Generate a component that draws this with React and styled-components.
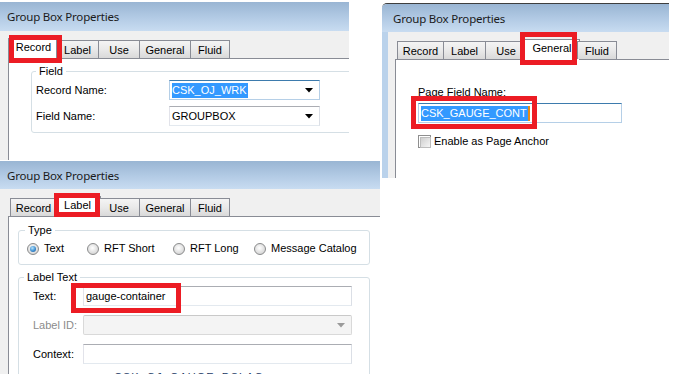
import React from 'react';
import styled, { createGlobalStyle, css } from 'styled-components';

const Global = createGlobalStyle`
  html, body { margin: 0; padding: 0; background: #fff; }
  * { box-sizing: border-box; }
`;

const UI_FONT = `"Liberation Sans", Arial, sans-serif`;

const Desktop = styled.div`
  position: relative;
  width: 677px;
  height: 374px;
  overflow: hidden;
  background: #fff;
  font: 11px/13px ${UI_FONT};
  color: #000;
`;

// dialogs sit on a free canvas, so they are placed by coordinates
const Win = styled.section`
  position: absolute;
  left: ${p => p.$x}px;
  top: ${p => p.$y}px;
  width: ${p => p.$w}px;
  height: ${p => p.$h}px;
  display: flex;
  flex-direction: column;
  overflow: hidden;
  background: #f0f0f0;
  ${p => p.$framed && css`
    border-top: 1px solid #3e3e3e;
    border-top-left-radius: 5px;
  `}
`;

const TitleBar = styled.div`
  flex: none;
  height: ${p => p.$h}px;
  padding-left: ${p => p.$indent}px;
  display: flex;
  align-items: center;
  background: linear-gradient(#99b5d3, #b3cbe5 55%, #c8dcf1);
  font: 11.5px "Noto Sans", "Open Sans", sans-serif;
  color: #1b1b1b;
  letter-spacing: -0.2px;
`;

const Body = styled.div`
  flex: 1;
  display: flex;
  flex-direction: column;
  padding: ${p => p.$top}px 0 0 ${p => p.$left}px;
  ${p => p.$framed && css`border-left: 6px solid #bad2eb;`}
`;

const TabStrip = styled.div`
  flex: none;
  display: flex;
  align-items: flex-end;
  height: 18px;
  padding-left: 2px;
  position: relative;
  z-index: 1;
`;

const Tab = styled.div`
  width: ${p => p.$w}px;
  height: 18px;
  margin-right: -1px;
  border: 1px solid #898c95;
  border-bottom: none;
  display: flex;
  align-items: center;
  justify-content: center;
  padding-top: 1px;
  background: linear-gradient(#f4f4f4, #e9e9e9 50%, #d9d9d9);
  white-space: nowrap;
  ${p => p.$active && css`
    background: #fff;
    height: 21px;
    margin: 0 -3px -1px -2px;
    width: ${p.$w + 4}px;
    padding-top: 0;
    padding-bottom: 3px;
  `}
`;

const Panel = styled.div`
  flex: 1;
  background: #fff;
  border-top: 1px solid #898c95;
  border-left: 1px solid #898c95;
  padding: ${p => p.$pad};
  display: flex;
  flex-direction: column;
  align-items: flex-start;
`;

const Group = styled.fieldset`
  margin: ${p => p.$margin || 0};
  width: ${p => p.$w}px;
  flex: none;
  border: 1px solid #d5dfe5;
  border-radius: 3px;
  padding: ${p => p.$pad};
  min-width: 0;
`;

const Legend = styled.legend`
  padding: 0 3px;
  font: 11px/13px ${UI_FONT};
  color: #000;
`;

const FormGrid = styled.div`
  display: grid;
  grid-template-columns: ${p => p.$cols};
  grid-auto-rows: 20px;
  row-gap: ${p => p.$gap}px;
  align-items: center;
  padding-left: ${p => p.$indent || 0}px;
`;

const FieldLabel = styled.span`
  color: ${p => (p.$disabled ? '#8b8b8b' : '#000')};
  white-space: nowrap;
`;

const TextBox = styled.div`
  height: 20px;
  width: ${p => p.$w}px;
  display: flex;
  align-items: center;
  padding: 0 2px;
  background: ${p => (p.$disabled ? '#f4f4f4' : '#fff')};
  border: 1px solid;
  border-color: ${p =>
    p.$focused
      ? '#3d7bad #b5cfe7 #b5cfe7 #b5cfe7'
      : p.$disabled
        ? '#c9c9c9 #d9d9d9 #d9d9d9 #d9d9d9'
        : '#abadb3 #dbdfe6 #e3e9ef #e2e3ea'};
  border-radius: ${p => (p.$disabled ? '2px' : 0)};
  white-space: nowrap;
`;

const Selected = styled.span`
  background: #3399ff;
  color: #fff;
  line-height: 15px;
  padding: 0 1px 0 0;
  ${p => p.$caret && css`border-right: 2px solid #e58a17;`}
`;

const Arrow = styled.svg`
  margin-left: auto;
  margin-right: 4px;
  flex: none;
`;

const RadioRow = styled.div`
  display: grid;
  grid-template-columns: 60px 86px 81px auto;
  padding: 5px 0 9px 2px;
`;

const RadioItem = styled.label`
  display: flex;
  align-items: center;
  gap: 5px;
  white-space: nowrap;
`;

const RadioDot = styled.span`
  width: 12px;
  height: 12px;
  border-radius: 50%;
  border: 1px solid #8a8b8c;
  background: radial-gradient(circle at 45% 40%, #ffffff, #e6e6e6 45%, #c9c9c9);
  display: flex;
  align-items: center;
  justify-content: center;
  &::after {
    content: '';
    width: 6px;
    height: 6px;
    border-radius: 50%;
    display: ${p => (p.$on ? 'block' : 'none')};
    background: radial-gradient(circle at 40% 35%, #b9e4fb, #3d8fd2 55%, #1a4f8e);
  }
`;

const CheckRow = styled.label`
  display: flex;
  align-items: center;
  gap: 3px;
  margin-top: 12px;
`;

const CheckBox = styled.span`
  width: 13px;
  height: 13px;
  border: 1px solid #8f8f8f;
  background: #fff;
  padding: 1px;
  &::after {
    content: '';
    display: block;
    width: 100%;
    height: 100%;
    background: linear-gradient(135deg, #cfcfcf, #f6f6f6);
    border: 1px solid #bdbdbd;
  }
`;

const TreeRow = styled.div`
  display: flex;
  align-items: center;
  gap: 4px;
  margin: 7px 0 0 58px;
  color: #1d3b66;
  letter-spacing: 1px;
`;

const Expander = styled.span`
  width: 8px;
  height: 8px;
  background: #e3e3e3;
  margin-right: 6px;
`;

// red annotation frames drawn over the dialogs
const Mark = styled.div`
  position: absolute;
  left: ${p => p.$x}px;
  top: ${p => p.$y}px;
  width: ${p => p.$w}px;
  height: ${p => p.$h}px;
  border: 5px solid #ec1c24;
  z-index: 5;
  pointer-events: none;
`;

const tabs = [
  ['Record', 47],
  ['Label', 43],
  ['Use', 42],
  ['General', 52],
  ['Fluid', 40],
];

function Tabs({ active }) {
  return (
    <TabStrip>
      {tabs.map(([name, w]) => (
        <Tab key={name} $w={w} $active={name === active}>{name}</Tab>
      ))}
    </TabStrip>
  );
}

function DropArrow({ color = '#000' }) {
  return (
    <Arrow width="8" height="5" viewBox="0 0 8 5">
      <polygon points="0,0 8,0 4,4.5" fill={color} />
    </Arrow>
  );
}

const radios = [
  ['Text', true],
  ['RFT Short', false],
  ['RFT Long', false],
  ['Message Catalog', false],
];

export default function App() {
  return (
    <Desktop>
      <Global />

      <Win $x={0} $y={2} $w={349} $h={158}>
        <TitleBar $h={29} $indent={7}>Group Box Properties</TitleBar>
        <Body $top={9} $left={8}>
          <Tabs active="Record" />
          <Panel $pad="6px 0 0 22px">
            <Group $w={400} $pad="2px 0 6px 4px">
              <Legend>Field</Legend>
              <FormGrid $cols="133px 151px" $gap={6}>
                <FieldLabel>Record Name:</FieldLabel>
                <TextBox $w={151} $focused>
                  <Selected>CSK_OJ_WRK</Selected>
                  <DropArrow />
                </TextBox>
                <FieldLabel>Field Name:</FieldLabel>
                <TextBox $w={151}>
                  GROUPBOX
                  <DropArrow />
                </TextBox>
              </FormGrid>
            </Group>
          </Panel>
        </Body>
      </Win>

      <Win $x={382} $y={3} $w={287} $h={175} $framed>
        <TitleBar $h={28} $indent={11}>Group Box Properties</TitleBar>
        <Body $top={9} $left={7} $framed>
          <Tabs active="General" />
          <Panel $pad="26px 0 0 22px">
            <FieldLabel>Page Field Name:</FieldLabel>
            <TextBox $w={204} $focused style={{ marginTop: 4 }}>
              <Selected $caret>CSK_GAUGE_CONT</Selected>
            </TextBox>
            <CheckRow>
              <CheckBox />
              Enable as Page Anchor
            </CheckRow>
          </Panel>
        </Body>
      </Win>

      <Win $x={0} $y={161} $w={380} $h={213}>
        <TitleBar $h={28} $indent={7}>Group Box Properties</TitleBar>
        <Body $top={9} $left={8}>
          <Tabs active="Label" />
          <Panel $pad="7px 0 0 9px">
            <Group $w={352} $pad="0 0 0 6px">
              <Legend>Type</Legend>
              <RadioRow>
                {radios.map(([name, on]) => (
                  <RadioItem key={name}>
                    <RadioDot $on={on} />
                    {name}
                  </RadioItem>
                ))}
              </RadioRow>
            </Group>
            <Group $w={352} $margin="6px 0 0 0" $pad="2px 0 10px 5px">
              <Legend>Label Text</Legend>
              <FormGrid $cols="50px 269px" $gap={9} $indent={9}>
                <FieldLabel>Text:</FieldLabel>
                <TextBox $w={269}>gauge-container</TextBox>
                <FieldLabel $disabled>Label ID:</FieldLabel>
                <TextBox $w={269} $disabled>
                  <DropArrow color="#9a9a9a" />
                </TextBox>
                <FieldLabel>Context:</FieldLabel>
                <TextBox $w={269} />
              </FormGrid>
              <TreeRow>
                <Expander />
                <svg width="10" height="10" viewBox="0 0 10 10">
                  <rect x="0" y="1" width="9" height="8" fill="#4b9bb5" />
                  <rect x="2" y="3" width="5" height="4" fill="#d8eef5" />
                </svg>
                CSK_OJ_GAUGE_DSLAO
              </TreeRow>
            </Group>
          </Panel>
        </Body>
      </Win>

      <Mark $x={9} $y={35} $w={53} $h={28} />
      <Mark $x={520} $y={32} $w={57} $h={33} />
      <Mark $x={411} $y={96} $w={126} $h={33} />
      <Mark $x={54} $y={193} $w={46} $h={24} />
      <Mark $x={71} $y={283} $w={110} $h={30} />
    </Desktop>
  );
}
